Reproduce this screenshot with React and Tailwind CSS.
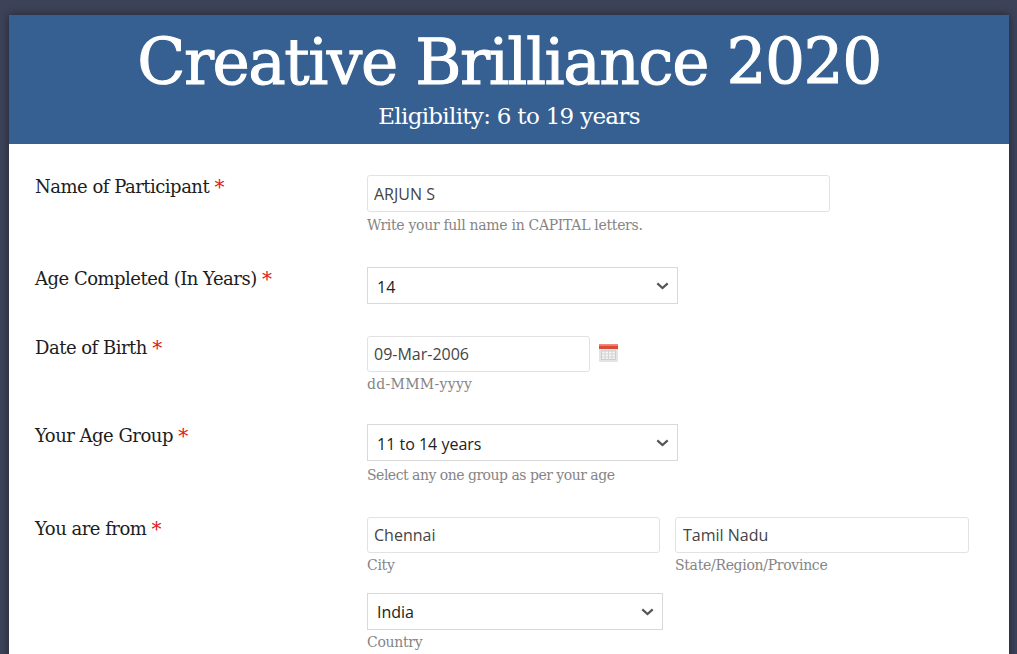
import React from 'react';

const serif = "font-['DejaVu_Serif',serif]";
const sans = "font-['Open_Sans',sans-serif]";

const Label = ({ children }) => (
    <label className={`w-[332px] shrink-0 pt-[1px] text-[18px] leading-[22px] tracking-[-0.5px] text-[#1d1d1d] ${serif}`}>
        {children} <span className="align-[-1px] text-[20px] leading-none text-[#e02020]">*</span>
    </label>
);

const Help = ({ children, className }) => (
    <p className={`h-[20px] text-[14px] leading-[20px] text-[#858585] ${serif} ${className || 'mt-[2px] tracking-[-0.3px]'}`}>{children}</p>
);

const TextInput = ({ value, className }) => (
    <input
        readOnly
        value={value}
        className={`block rounded-[3px] border border-[#e2e2e2] bg-white text-[16px] text-[#444] outline-none ${sans} ${className || 'h-[36px] w-full px-[6px]'}`}
    />
);

const Select = ({ value, className, selectClass }) => (
    <div className={`relative h-[37px] ${className}`}>
        <select
            defaultValue={value}
            className={`block h-full w-full appearance-none border border-[#d9d9d9] bg-white pl-[9px] text-[16px] text-[#222] outline-none ${sans} ${selectClass || 'pt-[2px]'}`}
        >
            <option>{value}</option>
        </select>
        <svg className="pointer-events-none absolute right-[9px] top-[15px]" width="13" height="8" viewBox="0 0 13 8" fill="none">
            <path d="M1.3 1.4 6.5 6l5.2-4.6" stroke="#555" strokeWidth="2.2" />
        </svg>
    </div>
);

const CalendarIcon = () => (
    <svg className="ml-[9px] mt-[8px] shrink-0" width="19" height="18" viewBox="0 0 19 18">
        <rect x="0" y="0" width="19" height="18" rx="1" fill="#e4e4e4" />
        <rect x="0" y="0" width="19" height="1.5" fill="#f08a78" />
        <rect x="0" y="1.5" width="19" height="3.5" fill="#dc4a38" />
        <rect x="2.5" y="7" width="14" height="8.5" fill="#f4f4f4" stroke="#c4c4c4" strokeWidth="0.8" />
        <path d="M6 7v8.5M9.5 7v8.5M13 7v8.5M2.5 10h14M2.5 13h14" stroke="#cfcfcf" strokeWidth="0.8" />
    </svg>
);

export default function App() {
    return (
        <div className="h-[654px] overflow-hidden bg-[#3c4258] pl-[9px] pr-[8px] pt-[15px]">
            <div className="min-h-[700px] rounded-t-[2px] bg-white shadow-[0_0_8px_rgba(0,0,0,0.45)]">
                <header className={`h-[129px] bg-[#366092] pt-[8px] text-center text-white ${serif}`}>
                    <h1 className="text-[63px] font-normal leading-[80px] tracking-[-1.5px] [-webkit-text-stroke:1px_white]">Creative Brilliance 2020</h1>
                    <p className="mt-[-2px] text-[23px] leading-[30px] tracking-[-0.7px]">Eligibility: 6 to 19 years</p>
                </header>

                <form className="px-[26px] pt-[31px]">
                    <div className="flex h-[92px]">
                        <Label>Name of Participant</Label>
                        <div className="w-[463px]">
                            <TextInput value="ARJUN S" className="h-[37px] w-full px-[6px]" />
                            <Help className="mt-[3px] tracking-[-0.3px]">Write your full name in CAPITAL letters.</Help>
                        </div>
                    </div>

                    <div className="flex h-[69px]">
                        <Label>Age Completed (In Years)</Label>
                        <Select value="14" className="w-[311px]" />
                    </div>

                    <div className="flex h-[88px]">
                        <Label>Date of Birth</Label>
                        <div className="w-[262px]">
                            <div className="flex">
                                <TextInput value="09-Mar-2006" className="h-[36px] w-[223px] shrink-0 px-[6px]" />
                                <CalendarIcon />
                            </div>
                            <Help className="mt-[2px] tracking-[0.3px]">dd-MMM-yyyy</Help>
                        </div>
                    </div>

                    <div className="flex h-[93px]">
                        <Label>Your Age Group</Label>
                        <div>
                            <Select value="11 to 14 years" className="w-[311px]" />
                            <Help className="mt-[4px] tracking-[-0.5px]">Select any one group as per your age</Help>
                        </div>
                    </div>

                    <div className="flex">
                        <Label>You are from</Label>
                        <div className="w-[602px]">
                            <div className="flex gap-[15px]">
                                <div className="w-[293px]">
                                    <TextInput value="Chennai" />
                                    <Help>City</Help>
                                </div>
                                <div className="w-[294px]">
                                    <TextInput value="Tamil Nadu" className="h-[36px] w-full pl-[7px] pr-[6px]" />
                                    <Help>State/Region/Province</Help>
                                </div>
                            </div>
                            <div className="mt-[18px]">
                                <Select value="India" className="w-[296px]" selectClass="pt-0" />
                                <Help>Country</Help>
                            </div>
                        </div>
                    </div>
                </form>
            </div>
        </div>
    );
}
